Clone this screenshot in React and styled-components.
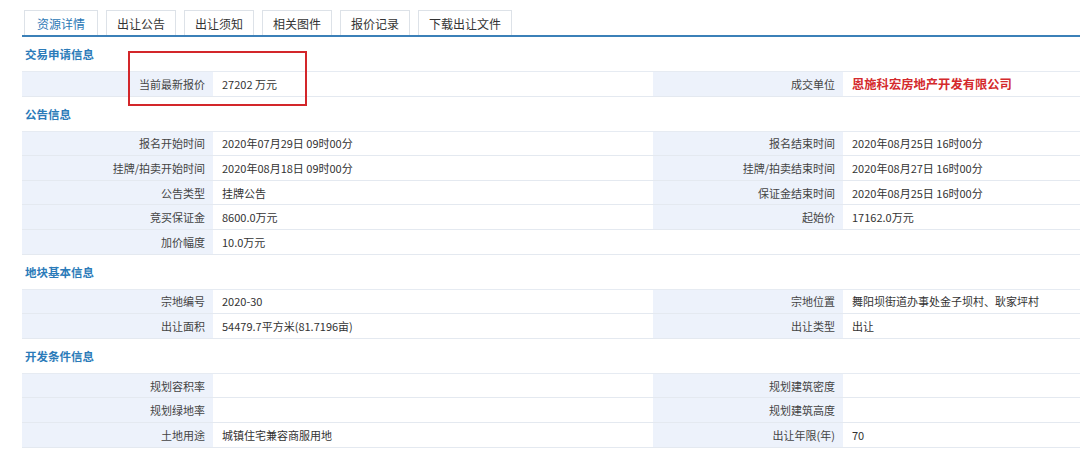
import React from "react";
import styled, { createGlobalStyle } from "styled-components";

const tabs = ["资源详情", "出让公告", "出让须知", "相关图件", "报价记录", "下载出让文件"];

const sections = [
  {
    title: "交易申请信息",
    rows: [
      [
        ["当前最新报价", "27202 万元"],
        ["成交单位", "恩施科宏房地产开发有限公司", true],
      ],
    ],
  },
  {
    title: "公告信息",
    rows: [
      [
        ["报名开始时间", "2020年07月29日 09时00分"],
        ["报名结束时间", "2020年08月25日 16时00分"],
      ],
      [
        ["挂牌/拍卖开始时间", "2020年08月18日 09时00分"],
        ["挂牌/拍卖结束时间", "2020年08月27日 16时00分"],
      ],
      [
        ["公告类型", "挂牌公告"],
        ["保证金结束时间", "2020年08月25日 16时00分"],
      ],
      [
        ["竞买保证金", "8600.0万元"],
        ["起始价", "17162.0万元"],
      ],
      [["加价幅度", "10.0万元"]],
    ],
  },
  {
    title: "地块基本信息",
    rows: [
      [
        ["宗地编号", "2020-30"],
        ["宗地位置", "舞阳坝街道办事处金子坝村、耿家坪村"],
      ],
      [
        ["出让面积", "54479.7平方米(81.7196亩)"],
        ["出让类型", "出让"],
      ],
    ],
  },
  {
    title: "开发条件信息",
    rows: [
      [
        ["规划容积率", ""],
        ["规划建筑密度", ""],
      ],
      [
        ["规划绿地率", ""],
        ["规划建筑高度", ""],
      ],
      [
        ["土地用途", "城镇住宅兼容商服用地"],
        ["出让年限(年)", "70"],
      ],
    ],
  },
];

const App = () => {
  return (
    <Page>
      <GlobalStyle />
      <TabBar>
        {tabs.map((t, i) => (
          <Tab key={t} $active={i === 0}>
            {t}
          </Tab>
        ))}
      </TabBar>
      <Body>
        <Highlight />
        {sections.map((s) => (
          <Section key={s.title}>
            <SectionTitle>{s.title}</SectionTitle>
            <Table>
              {s.rows.map((row, ri) => (
                <Row key={ri}>
                  {row.map(([label, value, red]) => (
                    <React.Fragment key={label}>
                      <Label>{label}</Label>
                      <Value $wide={row.length === 1} $red={red}>
                        {value}
                      </Value>
                    </React.Fragment>
                  ))}
                </Row>
              ))}
            </Table>
          </Section>
        ))}
      </Body>
    </Page>
  );
};

export default App;

const GlobalStyle = createGlobalStyle`
  html, body {
    margin: 0;
    padding: 0;
    background: #fff;
    overflow: hidden;
  }
  body {
    font-family: "Noto Sans CJK SC", "Noto Sans", sans-serif;
  }
`;

const Page = styled.div`
  width: 1080px;
  height: 451px;
  overflow: hidden;
  padding-top: 10px;
  box-sizing: border-box;
`;

const TabBar = styled.div`
  margin-left: 22px;
  display: flex;
  gap: 8px;
  padding-left: 2px;
  border-bottom: 2px solid #3b80b8;
`;

const Tab = styled.div`
  height: 25px;
  box-sizing: border-box;
  padding: 0 ${(p) => (p.$active ? "12px" : "10px")};
  display: flex;
  align-items: center;
  font-size: 12px;
  color: ${(p) => (p.$active ? "#2c78b6" : "#333")};
  border: 1px solid #dde2e8;
  border-bottom: none;
  background: #fff;
`;

const Body = styled.div`
  position: relative;
  margin-left: 22px;
`;

const Highlight = styled.div`
  position: absolute;
  left: 106px;
  top: 14px;
  width: 179px;
  height: 55px;
  border: 2px solid #d3262a;
  box-sizing: border-box;
  z-index: 2;
  pointer-events: none;
`;

const Section = styled.div``;

const SectionTitle = styled.div`
  height: 34px;
  display: flex;
  align-items: center;
  padding-left: 3px;
  font-size: 11.5px;
  font-weight: 700;
  color: #2b7bb9;
`;

const Table = styled.div`
  border-top: 1px solid #e6ebf2;
`;

const Row = styled.div`
  display: grid;
  grid-template-columns: 191px 440px 190px 1fr;
  height: 24.6px;
  box-sizing: border-box;
  border-bottom: 1px solid #e4e9f0;
`;

const Label = styled.div`
  background: #edf2fb;
  display: flex;
  align-items: center;
  justify-content: flex-end;
  padding-right: 8px;
  font-size: 11px;
  color: #444;
  white-space: nowrap;
`;

const Value = styled.div`
  display: flex;
  align-items: center;
  padding-left: 9px;
  font-size: ${(p) => (p.$red ? "12.3px" : "11px")};
  font-weight: ${(p) => (p.$red ? 700 : 400)};
  color: ${(p) => (p.$red ? "#d42a2d" : "#333")};
  grid-column: ${(p) => (p.$wide ? "span 3" : "auto")};
  white-space: nowrap;
`;
